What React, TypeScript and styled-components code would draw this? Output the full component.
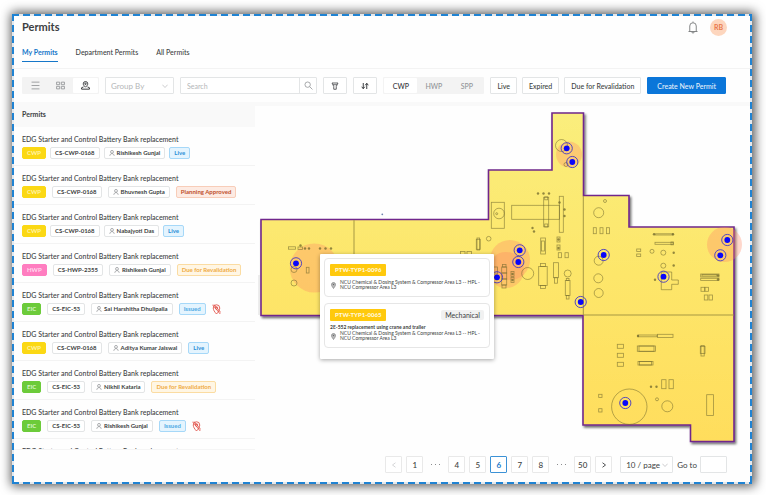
import React from "react";
import styled, { createGlobalStyle, css } from "styled-components";

const Global = createGlobalStyle`
  *, *::before, *::after { box-sizing: border-box; }
  body { margin: 0; background: #fff; }
  body, button, input, select { font-family: Lato, "Liberation Sans", sans-serif; }
  button, input, select { margin: 0; padding: 0; }
`;

const c = {
  blue: "#1677c9",
  primary: "#0b76d9",
  text: "#3d3f42",
  line: "#e3e5e6",
  soft: "#f3f3f3",
  band: "#f9f9f9",
};

const Page = styled.div`
  height: 100vh;
  min-height: 440px;
  display: flex;
  padding: 14px 14px 11px 12px;
  color: ${c.text};
`;

const dashX = `repeating-linear-gradient(90deg, #1f83d3 0 7px, #e4e9ee 7px 11px)`;
const dashY = `repeating-linear-gradient(180deg, #1f83d3 0 7px, #e4e9ee 7px 11px)`;

const Frame = styled.main`
  flex: 1;
  min-width: 0;
  display: flex;
  flex-direction: column;
  padding: 2px;
  box-shadow: 1px 0 10px 2px rgba(0, 0, 0, 0.66);
  background: ${dashX} top / 100% 2px no-repeat, ${dashX} bottom / 100% 2px no-repeat,
    ${dashY} left / 2px 100% no-repeat, ${dashY} right / 2px 100% no-repeat, #fefefe;
`;

const Header = styled.header`
  display: flex;
  align-items: center;
  justify-content: space-between;
  height: 22px;
  padding: 0 23px 0 8px;
`;

const Title = styled.h1`
  margin: 0;
  font-size: 11px;
  line-height: 16px;
  font-weight: 700;
`;

const HeaderActions = styled.div`
  display: flex;
  align-items: center;
  gap: 12px;
`;

const IconButton = styled.button`
  display: flex;
  border: 0;
  background: none;
  color: #77797b;
`;

const Avatar = styled.button`
  width: 17px;
  height: 17px;
  border: 0;
  border-radius: 50%;
  background: #fdd6be;
  color: #e8764c;
  font-size: 7px;
  font-weight: 700;
`;

const Tabs = styled.nav`
  display: flex;
  gap: 18px;
  height: 31px;
  padding: 6px 8px 0;
  border-bottom: 1px solid #f3f3f3;
`;

const Tab = styled.button<{ $active?: boolean }>`
  height: 18px;
  border: 0;
  border-bottom: 1px solid ${(p) => (p.$active ? c.blue : "transparent")};
  background: none;
  color: ${(p) => (p.$active ? c.blue : c.text)};
  font-size: 7px;
  font-weight: ${(p) => (p.$active ? 700 : 500)};
  padding-bottom: 2px;
`;

const Toolbar = styled.div`
  display: flex;
  align-items: center;
  gap: 6px;
  height: 33px;
  padding: 0 24px 0 8px;
`;

const box = css`
  height: 17px;
  border: 1px solid ${c.line};
  border-radius: 1px;
  background: #fff;
`;

const Segments = styled.div`
  display: flex;
  flex: none;
  height: 17px;
  padding: 1px;
  border-radius: 1px;
  background: ${c.soft};
`;

const Segment = styled.button<{ $active?: boolean; $wide?: boolean }>`
  width: ${(p) => (p.$wide ? 33 : 25)}px;
  display: flex;
  align-items: center;
  justify-content: center;
  border: 0;
  border-radius: 1px;
  background: ${(p) => (p.$active ? "#fff" : "transparent")};
  color: ${(p) => (p.$active ? "#333538" : "#929497")};
  font-size: 7px;
  font-weight: 500;
`;

const SelectBox = styled.div<{ $width: number; $dark?: boolean }>`
  ${box}
  width: ${(p) => p.$width}px;
  flex: none;
  display: flex;
  align-items: center;
  padding: 0 ${(p) => (p.$dark ? 4 : 5)}px 0 5px;
  color: #b4b6b8;

  select {
    flex: 1;
    min-width: 0;
    appearance: none;
    border: 0;
    background: none;
    color: ${(p) => (p.$dark ? c.text : "#b4b6b8")};
    font-size: 8px;
  }
  svg { flex: none; }
`;

const SearchBox = styled.form`
  ${box}
  flex: 1;
  min-width: 0;
  display: flex;

  input {
    flex: 1;
    min-width: 0;
    border: 0;
    background: none;
    padding: 0 6px;
    font-size: 7px;
  }
  input::placeholder { color: #b4b6b8; }
  button {
    width: 17px;
    display: flex;
    align-items: center;
    justify-content: center;
    border: 0;
    border-left: 1px solid ${c.line};
    background: none;
    color: #909295;
  }
`;

const Button = styled.button<{ $primary?: boolean; $icon?: boolean }>`
  ${box}
  flex: none;
  display: flex;
  align-items: center;
  justify-content: center;
  padding: 0 ${(p) => (p.$primary ? 9 : 6)}px;
  width: ${(p) => (p.$icon ? "24px" : "auto")};
  color: ${c.text};
  font-size: 7px;
  font-weight: 500;
  white-space: nowrap;
  svg { flex: none; }
  ${(p) =>
    p.$primary &&
    css`
      background: ${c.primary};
      border-color: ${c.primary};
      color: #e6f1fb;
    `}
`;

const Filters = styled.div`
  display: flex;
  flex: none;
  gap: 5px;
`;

const Body = styled.div`
  flex: 1;
  min-height: 0;
  display: grid;
  grid-template-columns: 241px 1fr;
`;

const ListPanel = styled.section`
  min-height: 0;
  display: flex;
  flex-direction: column;
  border-bottom: 1px solid #f5f5f5;
`;

const ListHeading = styled.h2`
  flex: none;
  margin: 0;
  padding: 0 8px;
  background: ${c.band};
  font-size: 7px;
  font-weight: 700;
  line-height: 25px;
`;

const List = styled.ul`
  flex: 1;
  min-height: 0;
  overflow-y: auto;
  scrollbar-width: none;
  list-style: none;
  margin: 0;
  padding: 0;
`;

const Row = styled.li`
  height: 39px;
  padding: 6px 8px 0;
  border-bottom: 1px solid #f3f3f3;
`;

const RowTitle = styled.h3`
  margin: 0;
  font-size: 7px;
  font-weight: 500;
  line-height: 13px;
  white-space: nowrap;
`;

const TagRow = styled.div<{ $tight?: boolean }>`
  display: flex;
  align-items: center;
  gap: ${(p) => (p.$tight ? 4 : 6)}px;
  padding-top: 1px;
`;

const tones = {
  CWP: ["#fbd814", "#fbd814", "#fff3a8"],
  HWP: ["#ff7dc0", "#ff7dc0", "#ffdcef"],
  EIC: ["#6ccb3a", "#6ccb3a", "#d9f5c8"],
  plain: ["#fff", c.line, c.text],
  Live: ["#e4f4fe", "#a6d8f8", "#2b8fd6"],
  Issued: ["#e4f4fe", "#a6d8f8", "#4eaae4"],
  "Planning Approved": ["#fdebe3", "#f8cdb9", "#bd4f2b"],
  "Due for Revalidation": ["#fff6e4", "#fbdca2", "#efab45"],
} as const;

const Tag = styled.span<{ $tone: keyof typeof tones }>`
  display: flex;
  align-items: center;
  gap: 2px;
  height: 12px;
  padding: 0 4px;
  border: 1px solid ${(p) => tones[p.$tone][1]};
  border-radius: 2px;
  background: ${(p) => tones[p.$tone][0]};
  color: ${(p) => tones[p.$tone][2]};
  font-size: 6px;
  font-weight: 700;
  line-height: 10px;
  white-space: nowrap;
  svg { color: #85878a; }
`;

const MapPane = styled.section`
  position: relative;
  min-width: 0;
  min-height: 0;
  border-top: 4px solid ${c.band};

  > svg { display: block; width: 100%; height: 100%; }
`;

const Popover = styled.aside`
  position: absolute;
  left: 65px;
  top: 148px;
  width: 174px;
  display: flex;
  flex-direction: column;
  gap: 6px;
  padding: 4px 4px 11px;
  background: #fff;
  border-radius: 1px;
  box-shadow: 0 1px 4px rgba(0, 0, 0, 0.35);
`;

const Card = styled.article`
  padding: 5px 5px 4px;
  border: 1px solid #e6e6e6;
  border-radius: 4px;
`;

const CardTop = styled.div`
  display: flex;
  justify-content: space-between;
  align-items: center;
`;

const Badge = styled.span`
  padding: 0 5px;
  border-radius: 1px;
  background: #ffc90d;
  color: #fff8df;
  font-size: 6px;
  font-weight: 900;
  line-height: 12px;
`;

const Kind = styled.span`
  padding: 0 4px;
  border-radius: 2px;
  background: #f1f1f1;
  font-size: 7px;
  line-height: 10px;
`;

const CardTitle = styled.p`
  margin: 3px 0 0;
  font-size: 5px;
  font-weight: 700;
  line-height: 7px;
`;

const Place = styled.p<{ $loose?: boolean }>`
  display: flex;
  align-items: center;
  gap: 4px;
  margin: ${(p) => (p.$loose ? 4 : 0)}px 0 0;
  font-size: 5px;
  line-height: 5px;
  padding: 0 0 2px 1px;
  svg { flex: none; }
`;

const Pager = styled.nav`
  flex: none;
  display: flex;
  align-items: center;
  justify-content: flex-end;
  gap: 4px;
  height: 32px;
  padding: 0 23px 3px 0;
  font-size: 8px;
`;

const PageButton = styled.button<{ $active?: boolean }>`
  ${box}
  width: 17px;
  display: flex;
  align-items: center;
  justify-content: center;
  border-color: ${(p) => (p.$active ? "#3c92d6" : "#e9e9e9")};
  color: ${(p) => (p.$active ? c.blue : c.text)};
  font-size: 8px;
  font-weight: ${(p) => (p.$active ? 700 : 500)};
  &:disabled { color: #c8cacc; }
`;

const Dots = styled.span`
  width: 17px;
  display: flex;
  justify-content: center;
  gap: 3px;
  i { width: 1px; height: 1px; background: #8b8d8f; }
`;

const PageSize = styled.div`
  display: flex;
  margin-left: 4px;
`;

const GoTo = styled.label`
  display: flex;
  align-items: center;
  gap: 3px;
  input {
    ${box}
    width: 27px;
    font-size: 8px;
  }
`;

const Svg = ({ size, h, box: vb = "0 0 16 16", w = 1.4, children }: { size: number; h?: number; box?: string; w?: number; children: React.ReactNode }) => (
  <svg width={size} height={h ?? size} viewBox={vb} fill="none" stroke="currentColor" strokeWidth={w} aria-hidden="true">
    {children}
  </svg>
);

const Chevron = () => (
  <Svg size={6} w={1.8}>
    <path d="M1 4.5 8 12l7-7.5" />
  </Svg>
);
const Person = () => (
  <Svg size={6} w={1.8}>
    <circle cx="8" cy="5" r="3.8" />
    <path d="M2.2 15.5c.3-3.6 2.6-5.8 5.8-5.8s5.5 2.2 5.8 5.8" />
  </Svg>
);
const PinOff = () => (
  <svg width="9" height="11" viewBox="0 0 18 22" fill="none" stroke="#e2574e" strokeWidth="1.8" aria-hidden="true">
    <path d="M9 20C5 15.500 2.500 12 2.500 8a6.500 6.500 0 0 1 13 0c0 4-2.500 7.500-6.500 12Z" />
    <circle cx="9" cy="8" r="2.500" />
    <path d="M1 1.500 16.500 20M4 1 17.500 17" />
  </svg>
);
const Pin = () => (
  <svg width="5" height="7" viewBox="0 0 10 14" aria-hidden="true">
    <path d="M5 13C2.500 9.500 1 7.500 1 5a4 4 0 0 1 8 0c0 2.500-1.500 4.500-4 8Z" fill="#bcbcbc" stroke="#77797b" strokeWidth="1.300" />
    <circle cx="5" cy="5" r="1.500" fill="#66686a" />
  </svg>
);

type PermitKind = "CWP" | "HWP" | "EIC";
type Status = "Live" | "Issued" | "Planning Approved" | "Due for Revalidation";
type Permit = { kind: PermitKind; id: string; person: string; status: Status; tight?: boolean; off?: boolean };

const permits: Permit[] = [
  { kind: "CWP", id: "CS-CWP-0168", person: "Rishikesh Gunjal", status: "Live", tight: true },
  { kind: "CWP", id: "CS-CWP-0168", person: "Bhuvnesh Gupta", status: "Planning Approved" },
  { kind: "CWP", id: "CS-CWP-0168", person: "Nabajyoti Das", status: "Live", tight: true },
  { kind: "HWP", id: "CS-HWP-2355", person: "Rishikesh Gunjal", status: "Due for Revalidation" },
  { kind: "EIC", id: "CS-EIC-53", person: "Sai Harshitha Dhulipalla", status: "Issued", off: true },
  { kind: "CWP", id: "CS-CWP-0168", person: "Aditya Kumar Jaiswal", status: "Live" },
  { kind: "EIC", id: "CS-EIC-53", person: "Nikhil Kataria", status: "Due for Revalidation" },
  { kind: "EIC", id: "CS-EIC-53", person: "Rishikesh Gunjal", status: "Issued", off: true },
];

const permitTitle = "EDG Starter and Control Battery Bank replacement";

const outline =
  "M552 113H583.500V195.500H629V227H734V441.500H690.500V425H583V315.500H261V219.500H488.500V170H552Z";

// x, y, width, height
const rects: number[][] = [
  [491.3, 202.3, 13, 26], [511.7, 205.3, 47.7, 14], [543.7, 197.3, 5, 29.5], [544.7, 196.800, 3, 3], [544.7, 224, 3, 3],
  [559.3, 196.3, 4, 36], [593.3, 227.7, 3, 6], [600, 227.7, 3, 6], [606.5, 227.7, 3, 6],
  [540.7, 238, 4.7, 16], [541.5, 241, 3, 10], [557, 237, 3, 5], [557, 245, 3, 5], [558.3, 252.7, 3.3, 5], [565, 252.7, 3.3, 5],
  [538.7, 266.5, 8.5, 19], [540.5, 263.5, 5, 3], [540.5, 285.5, 5, 3], [553.5, 262.7, 5, 15], [554.5, 277.7, 3, 5.5],
  [565.3, 280.5, 4.7, 15], [566.3, 278.5, 2.700, 2], [566.3, 295.5, 2.700, 3.500],
  [501.7, 267, 5, 6], [501.7, 273, 5, 6], [501.7, 279, 5, 6], [502.5, 264.5, 3.500, 2.500], [502, 285, 4, 3],
  [493.5, 267, 4, 7], [511, 271.5, 3, 5], [511, 277.5, 3, 5],
  [636.7, 249, 4, 2.5], [636.7, 254, 4, 2.5], [655, 233.8, 18, 1.2], [655, 242.3, 18, 2], [671, 242, 2.500, 2.800],
  [700.7, 274, 18.3, 3], [702, 274.500, 15, 1.500], [700.7, 278.3, 18.3, 2.3], [701, 287.3, 3.700, 4], [705, 287.3, 3.500, 4], [704.3, 295, 3.5, 5], [709, 295, 3.5, 5],
  [638, 335, 19, 1.8], [657.5, 334.3, 15.5, 3.3], [637.3, 346, 18.3, 5.3], [639, 346, 15, 5.3], [638, 361.5, 15, 3.5], [639.500, 361.500, 12, 3.500],
  [617.3, 344.3, 6.3, 4], [617.3, 353.3, 6.3, 4], [617.3, 362.3, 6.3, 4], [700.3, 346.5, 4.7, 7], [701, 345.500, 3.200, 10.500],
  [661.7, 379.7, 4.3, 9], [669, 379.7, 4.3, 9], [706.7, 394.7, 6.7, 20.7], [598.7, 394.3, 3.3, 3.3], [598.7, 408.7, 3.3, 3.3],
  [288.5, 246.8, 7, 2.4], [298, 247, 4.500, 2.400], [306.3, 267.3, 2.7, 5.7], [476.3, 239.3, 4, 10], [477, 238, 2.600, 12],
  [460.5, 251.5, 4.5, 3], [467, 251.5, 4.5, 3],
];

// cx, cy, r
const rings: number[][] = [
  [561.5, 145.5, 6], [566, 164.5, 2], [499, 213.5, 5.3], [496.7, 213.7, 1], [605, 201, 1.5], [598.7, 212.7, 5],
  [488.7, 238.7, 2.3], [527.7, 273.5, 6], [567.7, 273.5, 3.5], [598.7, 260.7, 4.5], [598.3, 278.3, 4.5], [598.7, 293, 4.5],
  [652, 251.3, 2], [663.3, 252.7, 2.5], [663.3, 265.7, 2.5], [657, 399.3, 1.5], [667.3, 406.3, 5.5], [629.3, 406.7, 17.7],
  [294, 269.5, 3], [294, 283, 3],
];

const specks: number[][] = [
  [538, 193.5], [543.5, 193.5], [549, 193.5], [559.500, 202.500], [564.5, 209.5], [564.5, 216], [532.5, 228], [534, 231.5], [655, 279.7],
  [673.7, 252.7], [673.7, 265.5], [651, 386.7], [656.5, 386.7], [305, 248.5], [309, 248.5], [320, 248.5], [325.5, 248.5], [331, 248.5],
  [300.500, 245.500], [558.500, 239.500], [558.500, 248], [654, 234.300], [673, 234.300], [638, 336], [718, 275.500], [718, 279.500], [512.500, 274], [512.500, 280],
];

const heat: number[][] = [
  [569, 154.5, 13], [314.3, 268, 24.5], [510, 260, 20], [506, 270, 18], [724.5, 244.5, 17.5],
];

const pins: number[][] = [
  [566.7, 148.3], [572.3, 162], [519.7, 250.3], [518.3, 262], [497, 277.3], [580.7, 302], [603.7, 255],
  [727.3, 240], [720.3, 255.3], [663.5, 276.7], [625.3, 403], [296, 263.3],
];

const SiteMap = () => (
  <svg viewBox="255 106 495 340" preserveAspectRatio="xMinYMin meet" role="img" aria-label="Site map">
    <defs>
      <linearGradient id="ground" x1="0" y1="0" x2="0" y2="1">
        <stop offset="0" stopColor="#faee7c" />
        <stop offset="0.5" stopColor="#fde66a" />
        <stop offset="1" stopColor="#ffdd5c" />
      </linearGradient>
      <filter id="drop" x="-5%" y="-5%" width="110%" height="110%">
        <feDropShadow dx="1.500" dy="2" stdDeviation="1.200" floodOpacity="0.55" />
      </filter>
    </defs>
    <path d={outline} fill="url(#ground)" stroke="#70288c" strokeWidth="1.600" filter="url(#drop)" />
    <path d="M354 220V315M583.300 196V315M584 315H734" stroke="#9d903f" strokeWidth="0.900" fill="none" />
    <path d="M259 275V315" stroke="#dcdcdc" />
    <circle cx="382.300" cy="214.300" r="0.900" fill="#6d83ad" />
    <g fill="#ff8a66" fillOpacity="0.33">
      {heat.map(([x, y, r]) => <circle key={`${x}-${y}`} cx={x} cy={y} r={r} />)}
    </g>
    <g fill="none" stroke="#6f672c" strokeOpacity="0.65" strokeWidth="0.800">
      {rects.map(([x, y, w, h]) => <rect key={`${x}-${y}-${h}`} x={x} y={y} width={w} height={h} />)}
      {rings.map(([x, y, r]) => <circle key={`${x}-${y}`} cx={x} cy={y} r={r} />)}
      <path d="M661.300 272H671.700V280H678.300V284.300H671.700V289.700H661.300Z" />
    </g>
    <g fill="#6f672c" fillOpacity="0.75">
      {specks.map(([x, y]) => <circle key={`${x}-${y}`} cx={x} cy={y} r="1.200" />)}
    </g>
    {pins.map(([x, y]) => (
      <g key={`${x}-${y}`}>
        <circle cx={x} cy={y} r="5.600" fill="none" stroke="#4438c4" strokeWidth="0.900" />
        <circle cx={x} cy={y} r="2.900" fill="#0a06fa" />
      </g>
    ))}
  </svg>
);

const place = "NCU Chemical & Dosing System & Compressor Area L3 -- HPL - NCU Compressor Area L3";

export default function App() {
  return (
    <>
      <Global />
      <Page>
        <Frame>
          <Header>
            <Title>Permits</Title>
            <HeaderActions>
              <IconButton aria-label="Notifications">
                <Svg size={10} h={13} box="0 0 20 26" w={1.8}>
                  <path d="M10 1v2M1 21h18M3.500 21V10a6.500 6.500 0 0 1 13 0v11M7.500 21.500a2.500 2.500 0 0 0 5 0" />
                </Svg>
              </IconButton>
              <Avatar aria-label="Account">RB</Avatar>
            </HeaderActions>
          </Header>
          <Tabs aria-label="Permit views">
            <Tab $active aria-current="page">My Permits</Tab>
            <Tab>Department Permits</Tab>
            <Tab>All Permits</Tab>
          </Tabs>
          <Toolbar>
            <Segments>
              <Segment aria-label="List view">
                <Svg size={9} w={1.5}><path d="M1 2h14M1 8h14M1 14h14" /></Svg>
              </Segment>
              <Segment aria-label="Grid view">
                <Svg size={9} w={1.5}><path d="M1 2h5.500v4.500H1zM9.500 2H15v4.500H9.500zM1 9.500h5.500V14H1zM9.500 9.500H15V14H9.500z" /></Svg>
              </Segment>
              <Segment $active aria-label="Map view" aria-pressed="true">
                <Svg size={9} w={1.7}>
                  <path d="M8 11C5.500 8.500 4 7 4 5a4 4 0 0 1 8 0c0 2-1.500 3.500-4 6ZM4.500 10.500 1 12v2.500h14V12l-3.500-1.500" />
                  <circle cx="8" cy="5" r="1.300" />
                </Svg>
              </Segment>
            </Segments>
            <SelectBox $width={69}>
              <select aria-label="Group by" defaultValue=""><option value="">Group By</option></select>
              <Chevron />
            </SelectBox>
            <SearchBox>
              <input type="search" placeholder="Search" aria-label="Search permits" />
              <button type="button" aria-label="Search">
                <Svg size={9}><circle cx="6.500" cy="6.500" r="4.800" /><path d="m10 10 5 5" /></Svg>
              </button>
            </SearchBox>
            <Button $icon aria-label="Filter">
              <Svg size={8} w={1.6}><path d="M2 2h12l-3.500 7v5.500h-5V9zM4 5.500h8" /></Svg>
            </Button>
            <Button $icon aria-label="Sort">
              <Svg size={8} w={2}><path d="M4.500 2v11M1.500 9.500l3 4 3-4M11.500 14V3M8.500 6.500l3-4 3 4" /></Svg>
            </Button>
            <Segments>
              <Segment $wide $active aria-pressed="true">CWP</Segment>
              <Segment $wide>HWP</Segment>
              <Segment $wide>SPP</Segment>
            </Segments>
            <Filters>
              <Button>Live</Button>
              <Button>Expired</Button>
              <Button>Due for Revalidation</Button>
            </Filters>
            <Button $primary>Create New Permit</Button>
          </Toolbar>
          <Body>
            <ListPanel>
              <ListHeading>Permits</ListHeading>
              <List>
                {permits.map((p, i) => (
                  <Row key={i}>
                    <RowTitle>{permitTitle}</RowTitle>
                    <TagRow $tight={p.tight}>
                      <Tag $tone={p.kind}>{p.kind}</Tag>
                      <Tag $tone="plain">{p.id}</Tag>
                      <Tag $tone="plain"><Person />{p.person}</Tag>
                      <Tag $tone={p.status}>{p.status}</Tag>
                      {p.off && <PinOff />}
                    </TagRow>
                  </Row>
                ))}
                <Row>
                  <RowTitle>{permitTitle}</RowTitle>
                </Row>
              </List>
            </ListPanel>
            <MapPane>
              <SiteMap />
              <Popover>
                <Card>
                  <CardTop><Badge>PTW-TYP1-0096</Badge></CardTop>
                  <Place $loose><Pin /><span>{place}</span></Place>
                </Card>
                <Card>
                  <CardTop><Badge>PTW-TYP1-0065</Badge><Kind>Mechanical</Kind></CardTop>
                  <CardTitle>2E-552 replacement using crane and trailer</CardTitle>
                  <Place><Pin /><span>{place}</span></Place>
                </Card>
              </Popover>
            </MapPane>
          </Body>
          <Pager aria-label="Pagination">
            <PageButton disabled aria-label="Previous page"><Svg size={6} w={2}><path d="M12 2 4 8l8 6" /></Svg></PageButton>
            <PageButton>1</PageButton>
            <Dots><i /><i /><i /></Dots>
            <PageButton>4</PageButton>
            <PageButton>5</PageButton>
            <PageButton $active aria-current="page">6</PageButton>
            <PageButton>7</PageButton>
            <PageButton>8</PageButton>
            <Dots><i /><i /><i /></Dots>
            <PageButton>50</PageButton>
            <PageButton aria-label="Next page"><Svg size={6} w={2.4}><path d="m4 2 8 6-8 6" /></Svg></PageButton>
            <PageSize>
              <SelectBox $width={53} $dark>
                <select aria-label="Page size"><option>10 / page</option></select>
                <Chevron />
              </SelectBox>
            </PageSize>
            <GoTo>Go to<input type="text" /></GoTo>
          </Pager>
        </Frame>
      </Page>
    </>
  );
}
